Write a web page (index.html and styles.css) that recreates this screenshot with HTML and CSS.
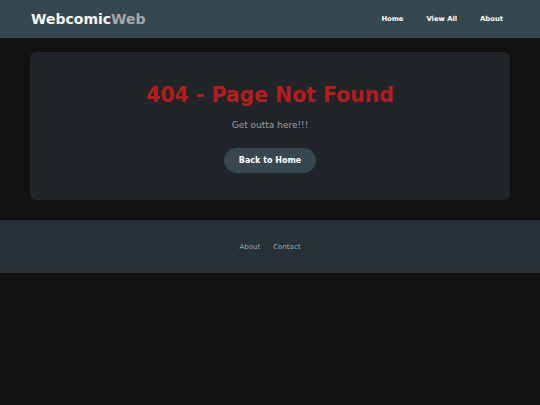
FILE: index.html
```html
<!DOCTYPE html>
<html lang="en">
<head>
<meta charset="utf-8">
<title>404 - WebcomicWeb</title>
<link rel="stylesheet" href="styles.css">
</head>
<body>
<header class="site-header">
  <a class="brand" href="#">Webcomic<span class="brand-accent">Web</span></a>
  <nav class="main-nav">
    <a href="#">Home</a>
    <a href="#">View All</a>
    <a href="#">About</a>
  </nav>
</header>
<main class="content">
  <section class="card">
    <h1 class="error-title">404 - Page Not Found</h1>
    <p class="error-text">Get outta here!!!</p>
    <a class="btn" href="#">Back to Home</a>
  </section>
</main>
<footer class="site-footer">
  <a href="#">About</a>
  <a href="#">Contact</a>
</footer>
</body>
</html>
```

FILE: styles.css
```css
* { box-sizing: border-box; }
html, body { margin: 0; padding: 0; }
body {
  background: #121212;
  font-family: "DejaVu Sans", Verdana, sans-serif;
  color: #e0e0e0;
}
a { text-decoration: none; }

.site-header {
  height: 38px;
  background: #37474f;
  display: flex;
  align-items: center;
  justify-content: space-between;
  padding: 0 37px 0 31px;
}
.brand {
  font-size: 14px;
  font-weight: bold;
  color: #f5f5f5;
}
.brand-accent { color: #a7a9ab; }
.main-nav {
  display: flex;
  gap: 23px;
}
.main-nav a {
  color: #ffffff;
  font-size: 6.8px;
  font-weight: bold;
}

.content {
  padding: 14px 30px 20px;
}
.card {
  background: #212529;
  border-radius: 6px;
  height: 148px;
  padding: 32px 20px 0;
  display: flex;
  flex-direction: column;
  align-items: center;
}
.error-title {
  margin: 0;
  font-size: 20.4px;
  font-weight: bold;
  color: #b71c1c;
  line-height: 23px;
}
.error-text {
  margin: 13px 0 0;
  font-size: 9px;
  line-height: 11px;
  color: #9e9e9e;
}
.btn {
  margin-top: 17px;
  height: 25px;
  padding: 0 15px;
  border-radius: 13px;
  background: #37474f;
  color: #ffffff;
  font-size: 8px;
  font-weight: bold;
  display: flex;
  align-items: center;
}

.site-footer {
  background: #263238;
  border-top: 1px solid #1f292e;
  height: 53px;
  display: flex;
  align-items: center;
  justify-content: center;
  gap: 13px;
}
.site-footer a {
  color: #9ea7ab;
  font-size: 7px;
}
```
